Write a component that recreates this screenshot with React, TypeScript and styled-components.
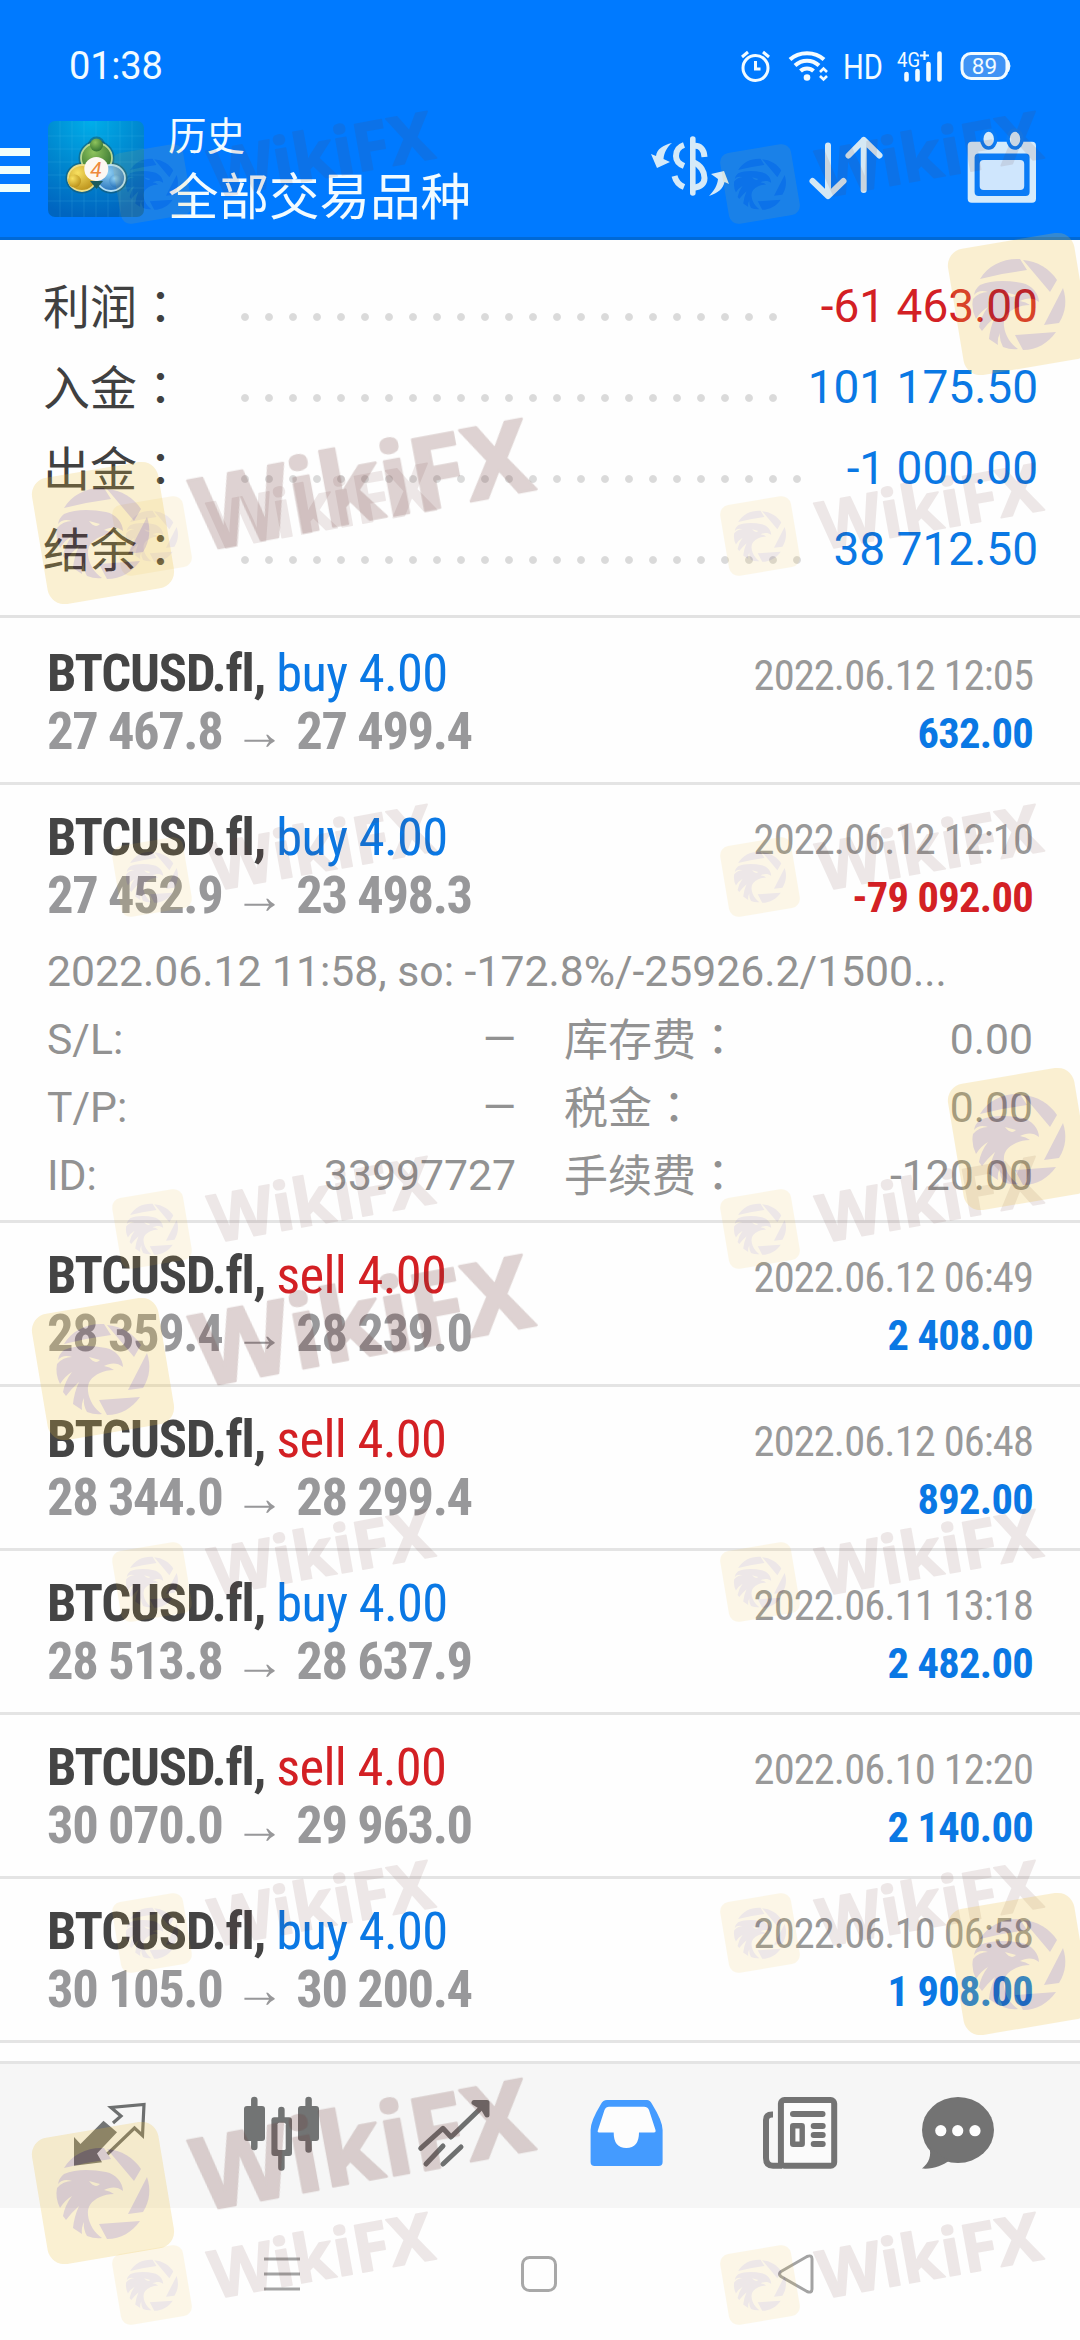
import React from "react";
import styled, { createGlobalStyle } from "styled-components";

const BLUE = "#0a78e4";
const RED = "#d32024";

type Deal = {
  side: "buy" | "sell";
  from: string;
  to: string;
  time: string;
  profit: string;
  expanded?: boolean;
};

const summary = [
  { label: "利润", value: "-61 463.00", color: RED, dots: 23 },
  { label: "入金", value: "101 175.50", color: BLUE, dots: 23 },
  { label: "出金", value: "-1 000.00", color: BLUE, dots: 24 },
  { label: "结余", value: "38 712.50", color: BLUE, dots: 24 },
];

const deals: Deal[] = [
  { side: "buy", from: "27 467.8", to: "27 499.4", time: "2022.06.12 12:05", profit: "632.00" },
  { side: "buy", from: "27 452.9", to: "23 498.3", time: "2022.06.12 12:10", profit: "-79 092.00", expanded: true },
  { side: "sell", from: "28 359.4", to: "28 239.0", time: "2022.06.12 06:49", profit: "2 408.00" },
  { side: "sell", from: "28 344.0", to: "28 299.4", time: "2022.06.12 06:48", profit: "892.00" },
  { side: "buy", from: "28 513.8", to: "28 637.9", time: "2022.06.11 13:18", profit: "2 482.00" },
  { side: "sell", from: "30 070.0", to: "29 963.0", time: "2022.06.10 12:20", profit: "2 140.00" },
  { side: "buy", from: "30 105.0", to: "30 200.4", time: "2022.06.10 06:58", profit: "1 908.00" },
];

const details = [
  ["S/L:", "—", "库存费", "0.00"],
  ["T/P:", "—", "税金", "0.00"],
  ["ID:", "33997727", "手续费", "-120.00"],
];

const smallRows = [184, 536, 877, 1229, 1582, 1933, 2285];

const GlobalStyle = createGlobalStyle`
  * {
    box-sizing: border-box;
  }

  body {
    margin: 0;
    background: #fefefe;
    font-family: Roboto, "Noto Sans CJK SC", sans-serif;
  }

  svg {
    display: block;
    flex: none;
    overflow: visible;
  }
`;

const Screen = styled.div`
  position: relative;
  width: 1080px;
  height: 2340px;
  display: flex;
  flex-direction: column;
  overflow: hidden;
  background: #fefefe;
`;

const Header = styled.header`
  height: 240px;
  flex: none;
  background: #007aff;
  border-bottom: 3px solid #0069d6;
  color: #f2fbff;
`;

const StatusBar = styled.div`
  height: 100px;
  padding: 32px 69px 0 69px;
  display: flex;
  align-items: center;
  justify-content: space-between;
`;

const Clock = styled.span`
  font-size: 38px;
  letter-spacing: -0.2px;
`;

const StatusIcons = styled.div`
  display: flex;
  align-items: center;
  gap: 18px;
`;

const Toolbar = styled.div`
  height: 137px;
  display: flex;
  align-items: center;
`;

const MenuButton = styled.div`
  width: 30px;
  margin-top: 3px;
  display: flex;
  flex-direction: column;
  gap: 10px;

  span {
    height: 8px;
    background: #f0fffb;
  }
`;

const AppLogo = styled.svg`
  margin-left: 18px;
`;

const Titles = styled.div`
  margin: 12px 0 0 24px;
  flex: 1;
`;

const Title = styled.div`
  font-size: 38.5px;
  line-height: 46px;
`;

const Subtitle = styled.div`
  font-size: 50.5px;
  line-height: 75px;
`;

const Actions = styled.div`
  display: flex;
  padding-right: 40px;
`;

const Action = styled.svg<{ $gap: number }>`
  margin-right: ${(p) => p.$gap}px;
`;

const Summary = styled.section`
  height: 378px;
  flex: none;
  padding: 26px 42px 0 43px;
  border-bottom: 3px solid #e2e2e2;
`;

const SummaryRow = styled.div`
  height: 81px;
  display: flex;
  align-items: center;
`;

const SummaryLabel = styled.span`
  width: 190px;
  margin-top: -3px;
  font-size: 47px;
  line-height: 81px;
  color: #404040;
`;

const Colon = styled.span`
  font-family: "Noto Sans CJK TC", sans-serif;
`;

const Leader = styled.span<{ $dots: number }>`
  width: ${(p) => p.$dots * 24}px;
  height: 10px;
  margin-top: 21px;
  background: radial-gradient(circle at center, #dadada 3.4px, transparent 4.4px) 0 0 / 24px 10px repeat-x;
`;

const SummaryValue = styled.span<{ $color: string }>`
  margin-left: auto;
  font-size: 46px;
  line-height: 81px;
  color: ${(p) => p.$color};
`;

const List = styled.main`
  flex: 1;
  padding-top: 3px;
`;

const DealItem = styled.article`
  padding: 23px 47px 0 47px;
  border-bottom: 3px solid #e4e4e4;
`;

const DealHead = styled.div<{ $expanded?: boolean }>`
  height: ${(p) => (p.$expanded ? 129 : 138)}px;
  display: flex;
  justify-content: space-between;
  font-family: "Roboto Condensed", Roboto, sans-serif;
  font-stretch: 75%;
`;

const Left = styled.div`
  line-height: 58px;
  font-size: 52.5px;
`;

const Right = styled.div`
  padding-top: 3px;
  line-height: 58px;
  text-align: right;
  font-size: 42.5px;
`;

const Symbol = styled.div`
  color: #444;
  font-weight: 700;
  letter-spacing: -1.15px;
`;

const Side = styled.span<{ $side: Deal["side"] }>`
  font-weight: 400;
  letter-spacing: -0.7px;
  color: ${(p) => (p.$side === "buy" ? BLUE : RED)};
`;

const Prices = styled.div`
  font-weight: 700;
  letter-spacing: -1.4px;
  color: #98989a;
`;

const Arrow = styled.span`
  margin: 0 11px 0 12px;
  font-family: "Liberation Sans", sans-serif;
  font-weight: 400;
  font-size: 51px;
  line-height: 1;
  letter-spacing: 0;
`;

const Time = styled.div`
  letter-spacing: -0.9px;
  color: #999;
`;

const Profit = styled.div<{ $loss: boolean }>`
  font-weight: 700;
  letter-spacing: -0.7px;
  color: ${(p) => (p.$loss ? RED : BLUE)};
`;

const DealDetails = styled.div`
  height: 283px;
  font-size: 42.7px;
  line-height: 68px;
  color: #929292;
`;

const DetailRow = styled.div`
  display: grid;
  grid-template-columns: 120px 349px 200px 1fr;
  height: 68px;
`;

const DetailValue = styled.span`
  text-align: right;
`;

const DetailLabel = styled.span`
  margin-top: -2px;
  padding-left: 48px;
  font-size: 44px;
  white-space: nowrap;
`;

const TabBar = styled.nav`
  height: 147px;
  flex: none;
  padding-left: 24px;
  display: flex;
  align-items: center;
  border-top: 3px solid #e4e4e4;
  background: #f6f6f6;
`;

const Tab = styled.div`
  width: 172px;
  display: flex;
  justify-content: center;
`;

const NavBar = styled.div`
  height: 132px;
  flex: none;
  padding: 0 266px 0 264px;
  display: flex;
  align-items: center;
  justify-content: space-between;
`;

const WatermarkLayer = styled.svg`
  position: absolute;
  inset: 0;
  pointer-events: none;
`;

const StatusText = { fill: "#f2fbff", fontFamily: "Roboto, sans-serif" };

function StatusGlyphs() {
  return (
    <StatusIcons>
      <svg width="29" height="32" viewBox="0 0 29 32" fill="none" stroke="#f2fbff" strokeWidth="3">
        <circle cx="14.5" cy="18" r="12.5" />
        <path d="M14.5 11v8h5" />
        <path d="M1 7l6-5M28 7l-6-5" />
      </svg>
      <svg width="40" height="32" viewBox="0 0 40 32" fill="none" stroke="#f2fbff" strokeWidth="4">
        <path d="M2 9.500C11 1 27 1 36 9.500M7 15.500C14 9 24 9 31 15.500M12.500 21C16 17.500 22 17.500 25.500 21" />
        <circle cx="19" cy="27.500" r="3.300" fill="#f2fbff" stroke="none" />
        <path d="M32 22l3.500-3.500L39 22M32 26l3.500 3.500L39 26" strokeWidth="2.600" />
      </svg>
      <svg width="34" height="32" viewBox="0 0 34 32">
        <text x="-3" y="28.500" fontSize="35" textLength="40" lengthAdjust="spacingAndGlyphs" {...StatusText}>
          HD
        </text>
      </svg>
      <svg width="44" height="32" viewBox="0 0 44 32">
        <text x="-1" y="17" fontSize="21" textLength="23" lengthAdjust="spacingAndGlyphs" {...StatusText}>
          4G
        </text>
        <path d="M22 5.500h9M26.500 1v9" stroke="#f2fbff" strokeWidth="2.200" />
        <path d="M8.500 24v5.500M19.500 21v8.500M30.500 14v15.500M41.500 3.500v26" stroke="#f2fbff" strokeWidth="4.600" strokeLinecap="round" />
      </svg>
      <svg width="51" height="32" viewBox="0 0 51 32">
        <rect x="2" y="3.500" width="45" height="25" rx="9" fill="#3f93f5" stroke="#f2fbff" strokeWidth="3" />
        <path d="M48.500 10.500q3 5.500 0 11z" fill="#f2fbff" stroke="#f2fbff" />
        <text x="24.500" y="24" fontSize="22.500" textAnchor="middle" {...StatusText}>
          89
        </text>
      </svg>
    </StatusIcons>
  );
}

function Logo() {
  return (
    <AppLogo width="96" height="96" viewBox="0 0 96 96">
      <defs>
        <radialGradient id="sky" cx="0.45" cy="0" r="1">
          <stop offset="0" stopColor="#00aeea" />
          <stop offset="0.5" stopColor="#0089d0" />
          <stop offset="1" stopColor="#0065c0" />
        </radialGradient>
        <radialGradient id="green" cx="0.4" cy="0.3" r="0.8">
          <stop offset="0" stopColor="#8fc45c" />
          <stop offset="1" stopColor="#2a6a2c" />
        </radialGradient>
        <radialGradient id="gold" cx="0.35" cy="0.3" r="0.8">
          <stop offset="0" stopColor="#f8e060" />
          <stop offset="1" stopColor="#b58a14" />
        </radialGradient>
        <radialGradient id="azure" cx="0.4" cy="0.3" r="0.8">
          <stop offset="0" stopColor="#8fd0f4" />
          <stop offset="1" stopColor="#1b68b4" />
        </radialGradient>
      </defs>
      <rect width="96" height="96" rx="7" fill="url(#sky)" />
      <path
        d="M12 0v96M24 0v96M36 0v96M48 0v96M60 0v96M72 0v96M84 0v96M0 15h96M0 28h96M0 41h96M0 54h96M0 67h96M0 80h96"
        stroke="#5fd0f0"
        strokeOpacity="0.16"
      />
      <g stroke="#1a4f58" strokeWidth="5" strokeOpacity="0.5">
        <ellipse cx="48.500" cy="37" rx="15.500" ry="15" />
        <ellipse cx="34" cy="57" rx="14" ry="13" />
        <ellipse cx="63" cy="57" rx="14" ry="13" />
        <circle cx="48.500" cy="24" r="6" />
      </g>
      <g strokeWidth="1.800">
        <ellipse cx="48.500" cy="37" rx="15.500" ry="15" fill="url(#green)" stroke="#b9d893" />
        <ellipse cx="34" cy="57" rx="14" ry="13" fill="url(#gold)" stroke="#ecdf8a" />
        <ellipse cx="63" cy="57" rx="14" ry="13" fill="url(#azure)" stroke="#b4dff5" />
      </g>
      <circle cx="48.500" cy="24" r="6.500" fill="url(#green)" />
      <circle cx="26.500" cy="60" r="6.500" fill="url(#gold)" />
      <circle cx="67.700" cy="60" r="6.500" fill="url(#azure)" />
      <path d="M42 60L48.500 68L55 60Z" fill="#1d5c5e" />
      <circle cx="48.300" cy="48" r="12" fill="#fdf8f2" />
      <text x="48" y="55.500" fontSize="21" fontStyle="italic" textAnchor="middle" fill="#ee8a3c" fontFamily="Roboto, sans-serif">
        4
      </text>
    </AppLogo>
  );
}

function ToolbarActions() {
  return (
    <Actions>
      <Action $gap={74} width="84" height="76" viewBox="0 0 84 76" fill="#d5eaf8">
        <path d="M44.800 8v54" stroke="#d5eaf8" strokeWidth="5.600" strokeLinecap="round" />
        <g fill="none" stroke="#d5eaf8" strokeWidth="6">
          <path d="M45 15C52 14 56 18 56.500 26" />
          <path d="M45 31C53 34 56.500 41 56.500 47C56.500 53 52 56 45 57" />
          <path d="M36 14C30 16 28 20 28 25C28 30 31 33 36 35" />
          <path d="M26.500 45C28 51 31 54 36 56" />
        </g>
        <path d="M24 12C15 14 9 18 8 25L3 23L9 37L22 31L15.500 28C16 22 19 16 24 12Z" />
        <path d="M61 65C70 62 75 58 76.500 51L81 53L76 40L63 43L70 48C69.500 54 66 60 61 65Z" />
      </Action>
      <Action
        $gap={78}
        width="80"
        height="76"
        viewBox="0 0 80 76"
        fill="none"
        stroke="#d5e8f4"
        strokeWidth="6"
        strokeLinecap="round"
        strokeLinejoin="round"
      >
        <path d="M22 14.500V64M6.500 50L22 65L37.500 50" />
        <path d="M57.700 59V9M42.500 24.500L57.700 9L73.500 24.500" />
      </Action>
      <Action $gap={0} width="76" height="76" viewBox="0 4 76 76">
        <rect x="3.700" y="14.700" width="68.300" height="61" rx="4" fill="#d5ebfb" />
        <rect x="10.600" y="26.500" width="55" height="42.500" rx="4" fill="#0a7cf6" />
        <rect x="15.700" y="33" width="44.500" height="30" rx="4" fill="#cfe6fd" />
        <ellipse cx="24.700" cy="12" rx="7" ry="9" fill="#d5ebfb" stroke="#0a7cf6" strokeWidth="3.500" />
        <ellipse cx="51" cy="12" rx="7" ry="9" fill="#d5ebfb" stroke="#0a7cf6" strokeWidth="3.500" />
      </Action>
    </Actions>
  );
}

function DealRow({ deal }: { deal: Deal }) {
  return (
    <DealItem>
      <DealHead $expanded={deal.expanded}>
        <Left>
          <Symbol>
            BTCUSD.fl, <Side $side={deal.side}>{deal.side} 4.00</Side>
          </Symbol>
          <Prices>
            {deal.from}
            <Arrow>→</Arrow>
            {deal.to}
          </Prices>
        </Left>
        <Right>
          <Time>{deal.time}</Time>
          <Profit $loss={deal.profit.startsWith("-")}>{deal.profit}</Profit>
        </Right>
      </DealHead>
      {deal.expanded && (
        <DealDetails>
          <div>2022.06.12 11:58, so: -172.8%/-25926.2/1500...</div>
          {details.map(([name, value, label, amount]) => (
            <DetailRow key={name}>
              <span>{name}</span>
              <DetailValue>{value}</DetailValue>
              <DetailLabel>
                {label}
                <Colon>：</Colon>
              </DetailLabel>
              <DetailValue>{amount}</DetailValue>
            </DetailRow>
          ))}
        </DealDetails>
      )}
    </DealItem>
  );
}

function Tabs() {
  return (
    <TabBar>
      <Tab>
        <svg width="80" height="80" viewBox="0 0 80 80">
          <path d="M4 41L10.500 48L33.500 24.700L47 36.300L27 57.500L32 66.300L4 69.700Z" fill="#727474" />
          <path d="M43 27L51 20L41 11.500L74 8.500L72.500 39.500L64.500 32L37.500 58" fill="none" stroke="#6d6f6f" strokeWidth="3.200" />
        </svg>
      </Tab>
      <Tab>
        <svg width="80" height="80" viewBox="0 0 80 80" fill="#727474">
          <path d="M12.300 4v47M39.400 14v57.500M66.600 4v49.500" stroke="#727474" strokeWidth="6.500" strokeLinecap="round" />
          <rect x="2" y="10" width="21" height="35" rx="3" />
          <rect x="29.400" y="21.300" width="20.600" height="38.700" rx="3" />
          <rect x="56" y="10" width="21" height="35" rx="3" />
          <rect x="35.500" y="26.700" width="8.200" height="27.300" rx="1.500" fill="#fafafa" />
        </svg>
      </Tab>
      <Tab>
        <svg
          width="80"
          height="80"
          viewBox="0 0 80 80"
          fill="none"
          stroke="#6e7070"
          strokeWidth="5"
          strokeLinecap="round"
          strokeLinejoin="round"
        >
          <path d="M6.700 52.300L28.900 32.300L37 41L71.700 7.500" />
          <path d="M60 6.500H73V19L69 12Z" fill="#6e7070" />
          <path d="M12 68L29 50M29 68L47 51" />
        </svg>
      </Tab>
      <Tab>
        <svg width="80" height="80" viewBox="0 0 80 80">
          <path
            d="M21 4H61Q64 4 66 8Q76.600 25 76.600 34V66Q76.600 70 72.600 70H8.600Q4.600 70 4.600 66V34Q4.600 25 15 8Q17 4 21 4Z"
            fill="#449bff"
          />
          <path
            d="M23 10.700H58Q61.500 10.700 63 14L69.500 34Q70 36.500 68 36.500H53Q53 52 40.300 52T27.700 36.500H13Q11 36.500 12 34L18.500 14Q20 10.700 23 10.700Z"
            fill="#fdfdfd"
          />
        </svg>
      </Tab>
      <Tab>
        <svg width="80" height="80" viewBox="0 0 80 80" fill="#737373">
          <path d="M15 18.500H14Q8 18.500 8 24V62Q8 69.700 15 69.700H24" fill="none" stroke="#737373" strokeWidth="6" />
          <rect x="22.900" y="4" width="53.300" height="65.700" rx="3.500" fill="#fbfbfb" stroke="#737373" strokeWidth="6" />
          <rect x="32" y="15" width="35.500" height="6" rx="3" />
          <rect x="34.700" y="29.700" width="9.500" height="18.600" fill="#fbfbfb" stroke="#737373" strokeWidth="5.400" rx="0.500" />
          <rect x="52.700" y="27" width="15" height="6" rx="3" />
          <rect x="52.700" y="36" width="15" height="6" rx="3" />
          <rect x="52.700" y="45" width="15" height="6" rx="3" />
        </svg>
      </Tab>
      <Tab>
        <svg width="80" height="80" viewBox="0 0 80 80" fill="#737373">
          <ellipse cx="28" cy="34" rx="36" ry="33" />
          <path d="M-1 51C2 59 -1 67 -8 72.500C3 73.500 13 69 19 65Z" />
          <circle cx="10.800" cy="34.700" r="5.600" fill="#fdfdfd" />
          <circle cx="27.700" cy="34.700" r="5.600" fill="#fdfdfd" />
          <circle cx="45" cy="34.700" r="5.600" fill="#fdfdfd" />
        </svg>
      </Tab>
    </TabBar>
  );
}

// rounded yellow badge with the eagle inside a shutter ring, centred on 0,0
function Badge() {
  return (
    <>
      <rect x="-64" y="-64" width="128" height="128" rx="17" fill="#edbf37" transform="rotate(-9.500)" />
      <g fill="#6c3442">
        <path d="M-39 -25C-31 -39 -15 -46 1 -45L8 -34L-17 -30Z" />
        <path d="M4 -44C18 -43 31 -35 38 -24L31 -12Z" />
        <path d="M44 -16C48 -4 47 8 40 19L25 21Z" />
        <path d="M37 28C29 39 18 46 4 46L-4 31Z" />
        <path
          fillRule="evenodd"
          d="M-39 -19C-28 -24 -12 -24 3 -21C13 -19 20 -10 20 -2C14 -7 7 -6 1 -3Q7 -2 11 1Q3 1 -3 4C-12 8 -16 14 -15 22C-14 32 -8 40 -1 45Q-8 46 -16 43Q-20 36 -19 29Q-22 35 -21 41L-30 35Q-29 24 -24 13Q-32 20 -37 27L-40 23Q-38 12 -31 3Q-38 7 -43 15Q-48 5 -46 -5Q-40 -12 -31 -12Q-40 -15 -45 -9Q-44 -15 -39 -19ZM-14 -12Q-8 -4 -3 -9Z"
        />
      </g>
    </>
  );
}

function Watermarks() {
  return (
    <WatermarkLayer
      width="1080"
      height="2340"
      viewBox="0 0 1080 2340"
      fontFamily="Noto Sans, sans-serif"
      fontWeight="700"
      fill="#6c3a36"
      strokeLinejoin="round"
    >
      {smallRows.map((y) =>
        [152, 760].map((x) => (
          <g key={`${x}-${y}`} opacity="0.11" transform={`translate(${x} ${y})`}>
            <g transform="scale(0.56)">
              <Badge />
            </g>
            <text fontSize="66.500" stroke="#6c3a36" strokeWidth="1.600" transform="translate(62 14) rotate(-10.200)">
              WikiFX
            </text>
          </g>
        ))
      )}
      {[533, 1369, 2193].map((y) => (
        <g key={y} opacity="0.22" transform={`translate(103 ${y})`}>
          <Badge />
          <text fontSize="100.500" stroke="#6c3a36" strokeWidth="2.500" transform="translate(97.500 18.500) rotate(-10.500)">
            WikiFX
          </text>
        </g>
      ))}
      {[304, 1139, 1964].map((y) => (
        <g key={y} opacity="0.22" transform={`translate(1019 ${y})`}>
          <Badge />
        </g>
      ))}
    </WatermarkLayer>
  );
}

export default function App() {
  return (
    <Screen>
      <GlobalStyle />
      <Header>
        <StatusBar>
          <Clock>01:38</Clock>
          <StatusGlyphs />
        </StatusBar>
        <Toolbar>
          <MenuButton>
            <span />
            <span />
            <span />
          </MenuButton>
          <Logo />
          <Titles>
            <Title>历史</Title>
            <Subtitle>全部交易品种</Subtitle>
          </Titles>
          <ToolbarActions />
        </Toolbar>
      </Header>

      <Summary>
        {summary.map((row) => (
          <SummaryRow key={row.label}>
            <SummaryLabel>
              {row.label}
              <Colon>：</Colon>
            </SummaryLabel>
            <Leader $dots={row.dots} />
            <SummaryValue $color={row.color}>{row.value}</SummaryValue>
          </SummaryRow>
        ))}
      </Summary>

      <List>
        {deals.map((deal) => (
          <DealRow key={deal.time} deal={deal} />
        ))}
      </List>

      <Tabs />

      <NavBar>
        <svg width="36" height="36" viewBox="0 0 36 36" stroke="#a3a3a3" strokeWidth="3">
          <path d="M0 3h36M0 18h36M0 33h36" />
        </svg>
        <svg width="36" height="36" viewBox="0 0 36 36" fill="none" stroke="#a8a8a8" strokeWidth="3">
          <rect x="1.500" y="1.500" width="33" height="33" rx="7" />
        </svg>
        <svg width="36" height="40" viewBox="0 0 36 40" fill="none" stroke="#a3a3a3" strokeWidth="3">
          <path d="M3 17.500L29 2.500Q34 0.500 34 5V35Q34 39.500 29 37.500L3 22.500Q0 20 3 17.500Z" />
        </svg>
      </NavBar>
      <Watermarks />
    </Screen>
  );
}
